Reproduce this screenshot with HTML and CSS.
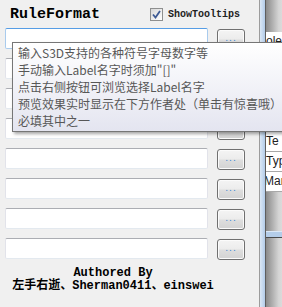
FILE: index.html
```html
<!DOCTYPE html>
<html lang="zh">
<head>
    <meta charset="UTF-8">
    <title>RuleFormat</title>
    <link rel="stylesheet" href="styles.css">
</head>
<body>
    <div class="window">
        <!-- 左侧规则面板 -->
        <div class="left">
            <div class="header">
                <span class="title">RuleFormat</span>
                <label class="check">
                    <span class="box">
                        <svg width="9" height="9" viewBox="0 0 9 9"><path d="M1 4.5 L3.5 7.5 L8 1" fill="none" stroke="#3d5a94" stroke-width="1.8"/></svg>
                    </span>
                    ShowTooltips
                </label>
            </div>

            <div class="rows">
                <div class="row"><div class="textbox focused"></div><button class="browse">...</button></div>
                <div class="row"><div class="textbox"></div><button class="browse">...</button></div>
                <div class="row"><div class="textbox"></div><button class="browse">...</button></div>
                <div class="row"><div class="textbox"></div><button class="browse">...</button></div>
                <div class="row"><div class="textbox"></div><button class="browse">...</button></div>
                <div class="row"><div class="textbox"></div><button class="browse">...</button></div>
                <div class="row"><div class="textbox"></div><button class="browse">...</button></div>
                <div class="row"><div class="textbox"></div><button class="browse">...</button></div>
            </div>

            <div class="footer">
                <div>Authored By</div>
                <div>左手右逝、Sherman0411、einswei</div>
            </div>
        </div>

        <!-- 分隔条 -->
        <div class="splitter"></div>

        <!-- 右侧属性面板 -->
        <div class="right">
            <div class="shade"></div>
            <div class="grid">
                <div class="cell">ole</div>
                <div class="cell"></div>
                <div class="cell"></div>
                <div class="cell"></div>
                <div class="cell"></div>
                <div class="cell">Te</div>
                <div class="cell">Typ</div>
                <div class="cell cut">Mari</div>
            </div>
            <div class="shade lower"></div>
            <div class="band"></div>
            <div class="shade fill"></div>
        </div>

        <!-- 提示框 -->
        <div class="tooltip">
            <div>输入S3D支持的各种符号字母数字等</div>
            <div>手动输入Label名字时须加"[]"</div>
            <div>点击右侧按钮可浏览选择Label名字</div>
            <div>预览效果实时显示在下方作者处（单击有惊喜哦）</div>
            <div>必填其中之一</div>
        </div>
    </div>
</body>
</html>
```

FILE: styles.css
```css
body {
    margin: 0;
    padding: 0;
    overflow: hidden;
}

.window {
    position: relative;
    display: flex;
    width: 282px;
    height: 307px;
    overflow: hidden;
}

.left {
    width: 259px;
    flex-shrink: 0;
    background: #f0f0f0;
}

.header {
    height: 28px;
    display: flex;
    align-items: center;
    justify-content: space-between;
    padding: 0 19px 0 10px;
}

.title {
    font-family: 'Liberation Mono', monospace;
    font-weight: bold;
    font-size: 15px;
    color: #000;
}

.check {
    display: flex;
    align-items: center;
    gap: 5px;
    font-family: 'Liberation Mono', monospace;
    font-weight: bold;
    font-size: 10px;
    color: #222;
}

.box {
    width: 11px;
    height: 11px;
    border: 1px solid #8e8f8f;
    background: linear-gradient(135deg, #d8d8d8, #ffffff);
    display: flex;
    align-items: center;
    justify-content: center;
}

.rows {
    display: flex;
    flex-direction: column;
    gap: 9px;
    padding-left: 5px;
}

.row {
    display: flex;
    gap: 9px;
    height: 21px;
}

.textbox {
    width: 201px;
    height: 19px;
    background: #fff;
    border: 1px solid #e2e3ea;
    border-top-color: #abadb3;
    border-bottom-color: #e3e9ef;
    border-radius: 2px;
}

.textbox.focused {
    border-color: #a9cbed;
    border-top-color: #569de5;
}

.browse {
    width: 28px;
    height: 21px;
    margin-top: 1px;
    padding: 0 0 4px;
    border: 1px solid #707070;
    border-radius: 3px;
    background: linear-gradient(#f4f4f4 0%, #ececec 48%, #dedede 52%, #d3d3d3 100%);
    box-shadow: inset 0 0 0 1px #fbfbfb;
    color: #3a86d0;
    font-size: 9px;
    letter-spacing: 1px;
    font-family: 'DejaVu Sans', sans-serif;
}

.footer {
    width: 226px;
    margin-top: 8px;
    text-align: center;
    font-family: 'Liberation Mono', 'Noto Sans CJK SC', monospace;
    font-weight: bold;
    font-size: 12px;
    line-height: 13px;
    color: #000;
}

.splitter {
    width: 5px;
    flex-shrink: 0;
    border-left: 1px solid #9c9c9c;
    border-right: 1px solid #5e5e5e;
    background: linear-gradient(to right, #dbe8f6, #b3cce9);
}

.right {
    flex: 1;
    display: flex;
    flex-direction: column;
}

.shade {
    height: 32px;
    background: linear-gradient(to right, #8a8a8a, #d4d4d4 60%, #e4e4e4);
}

.shade.lower {
    height: 39px;
}

.shade.fill {
    flex: 1;
}

.band {
    height: 5px;
    background: #b4cde9;
    border-top: 1px solid #dce9f7;
    border-bottom: 1px solid #4a4a4a;
}

.grid {
    background: #fff;
}

.cell {
    height: 19px;
    border-bottom: 1px solid #a8a8a8;
    font-family: 'Liberation Sans', sans-serif;
    font-size: 12px;
    line-height: 19px;
    color: #222;
    white-space: nowrap;
    overflow: hidden;
}

.cell.cut {
    text-indent: -2px;
}

.tooltip {
    position: absolute;
    left: 12px;
    top: 42px;
    width: 290px;
    height: 86px;
    padding: 1px 5px;
    border: 1px solid #767676;
    background: linear-gradient(#ffffff, #e4e5f0);
    box-shadow: 2px 2px 3px rgba(0, 0, 0, 0.35);
    font-family: 'Noto Sans CJK SC', sans-serif;
    font-size: 12px;
    line-height: 17px;
    color: #575757;
    white-space: nowrap;
}
```
